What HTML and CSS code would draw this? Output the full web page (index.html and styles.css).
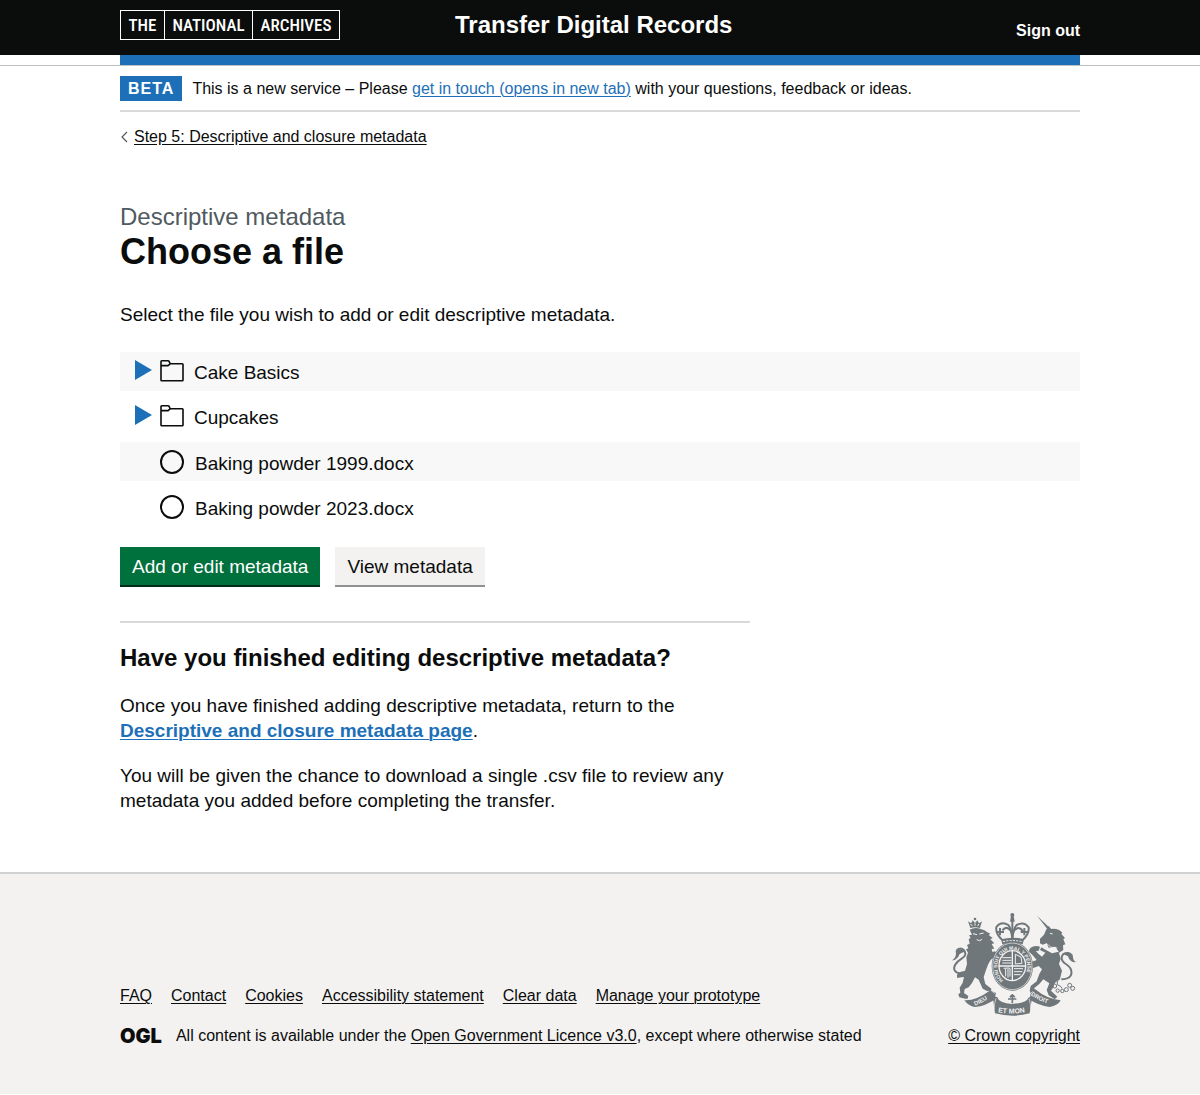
FILE: index.html
```html
<!DOCTYPE html>
<html lang="en">
<head>
<meta charset="utf-8">
<meta name="viewport" content="width=device-width, initial-scale=1">
<title>Choose a file – Transfer Digital Records</title>
<link rel="stylesheet" href="styles.css">
</head>
<body>
<header class="header">
  <div class="container header-row">
    <a class="logo" href="#"><span>THE</span><span>NATIONAL</span><span>ARCHIVES</span></a>
    <a class="service-name" href="#">Transfer Digital Records</a>
    <a class="sign-out" href="#">Sign out</a>
  </div>
</header>
<div class="header-rule"><div class="container header-bar"></div></div>

<div class="container">
  <div class="phase-banner">
    <strong class="tag">BETA</strong>
    <span>This is a new service – Please <a class="link-blue" href="#">get in touch (opens in new tab)</a> with your questions, feedback or ideas.</span>
  </div>
  <a class="back-link" href="#">
    <svg class="back-icon" width="8" height="12" viewBox="0 0 8 12" aria-hidden="true"><path d="M7 1 2 6l5 5" fill="none" stroke="#505a5f" stroke-width="1.2"/></svg>
    <span>Step 5: Descriptive and closure metadata</span>
  </a>

  <main class="main">
    <h1 class="title"><span class="caption">Descriptive metadata</span>Choose a file</h1>
    <p class="body lead">Select the file you wish to add or edit descriptive metadata.</p>

    <form>
      <ul class="tree">
        <li class="row">
          <button class="toggle" type="button" aria-expanded="false">
            <svg class="arrow" width="17" height="20" viewBox="0 0 17 20" aria-hidden="true"><path d="M0 0 17 10 0 20z" fill="#1d70b8"/></svg>
            <svg class="folder" width="24" height="22" viewBox="0 0 24 22" aria-hidden="true"><path d="M1 20V1.500q0-.7.7-.7H8q.8 0 1.200.8L10.200 3.800H22.300q.7 0 .7.700V20q0 .7-.7.7H1.700Q1 20.700 1 20zM1 5.600h7L10.200 3.800" fill="none" stroke="#0b0c0c" stroke-width="1.600"/></svg>
            <span>Cake Basics</span>
          </button>
        </li>
        <li class="row">
          <button class="toggle" type="button" aria-expanded="false">
            <svg class="arrow" width="17" height="20" viewBox="0 0 17 20" aria-hidden="true"><path d="M0 0 17 10 0 20z" fill="#1d70b8"/></svg>
            <svg class="folder" width="24" height="22" viewBox="0 0 24 22" aria-hidden="true"><path d="M1 20V1.500q0-.7.7-.7H8q.8 0 1.200.8L10.200 3.800H22.300q.7 0 .7.700V20q0 .7-.7.7H1.700Q1 20.700 1 20zM1 5.600h7L10.200 3.800" fill="none" stroke="#0b0c0c" stroke-width="1.600"/></svg>
            <span>Cupcakes</span>
          </button>
        </li>
        <li class="row file">
          <input class="radio" type="radio" name="file" id="file-1999">
          <label for="file-1999">Baking powder 1999.docx</label>
        </li>
        <li class="row file">
          <input class="radio" type="radio" name="file" id="file-2023">
          <label for="file-2023">Baking powder 2023.docx</label>
        </li>
      </ul>
      <div class="buttons">
        <button class="button" type="submit">Add or edit metadata</button>
        <button class="button secondary" type="button">View metadata</button>
      </div>
    </form>

    <section class="finished">
      <h2 class="subtitle">Have you finished editing descriptive metadata?</h2>
      <p class="body">Once you have finished adding descriptive metadata, return to the <a class="link-blue strong" href="#">Descriptive and closure metadata page</a>.</p>
      <p class="body">You will be given the chance to download a single .csv file to review any metadata you added before completing the transfer.</p>
    </section>
  </main>
</div>

<footer class="footer">
  <div class="container footer-row">
    <div>
      <ul class="footer-links">
        <li><a href="#">FAQ</a></li>
        <li><a href="#">Contact</a></li>
        <li><a href="#">Cookies</a></li>
        <li><a href="#">Accessibility statement</a></li>
        <li><a href="#">Clear data</a></li>
        <li><a href="#">Manage your prototype</a></li>
      </ul>
      <div class="licence">
        <span class="ogl">OGL</span>
        <span>All content is available under the <a href="#">Open Government Licence v3.0</a>, except where otherwise stated</span>
      </div>
    </div>
    <a class="copyright" href="#">
      <svg class="arms" width="128" height="104" viewBox="30 36 384 312" aria-hidden="true">
        <defs>
          <path id="garter" d="M190 241A45 51 0 1 1 244 241"/>
          <path id="scroll-left" d="M105 317Q134 306 158 285"/>
          <path id="scroll-mid" d="M174 337Q217 345 262 335"/>
          <path id="scroll-right" d="M272 285Q300 306 342 316"/>
        </defs>
        <g class="ink">
          <!-- lion and its crown -->
          <path d="M91 84 84 64l9 6 5-9 7 8 7-8 5 9 9-6-6 20q-15-5-29 0z"/>
          <circle cx="105" cy="57" r="4"/>
          <path d="M89 89q16-9 33-2 13 3 19 9l10 5-5 4 12 9-7 4 12 12-8 2 8 14-8 1 5 18-7 13-8 14-7 18-7 22 5 20 18 14-1 6-12 1-13-7-12-27-11-7-9 17-10 13-12 5-2 12 13 9-2 8H75l-17-4-3-9 6-5-2-15 9-15 4-17-20 2-1-9 9-7 15-5 6-20-2-20 5-14-6-10 7-3-4-10 8-4-3-14 6-3-5-8 9-2z"/>
          <path d="M147 160l18-6 7 7-10 12-20 12-5-15zM66 214l-13 10-2 9 22-4z"/>
          <!-- unicorn -->
          <path d="M291 47 332 86l-6 6z"/>
          <path d="M300 116 312 104 318 90 326 78 333 87Q355 84 367 98L364 102 375 114 370 118 376 133 369 136 370 150 358 158 346 140 326 143 320 130 308 134 300 130z"/>
          <path d="M304 142 318 150 336 160 356 155 362 176 357 192 366 212 360 236 345 248 340 262 333 272 352 290 344 298 326 286 320 270 328 250 310 238 298 252 283 264 285 278 276 285 269 272 272 258 290 244 298 222 306 208 296 198 280 204 272 196 274 186 290 180 278 166 266 154 270 146 282 148 296 162 306 170 316 158 300 150z"/>
          <path d="M268 148Q280 134 300 140L296 152 284 154z"/>
          <!-- scroll -->
          <path d="M73 301q35 2 78-30l17 8-5 20q-25 18-58 22-20-3-32-20zM272 272l14-4q34 29 76 33-8 16-33 20-34-5-59-22z"/>
          <path d="M158 287l14 5q4 17 45 20 44-3 48-19l12-6-8 53q-50 14-104 0z"/>
          <!-- garter -->
          <ellipse cx="217" cy="199" rx="62" ry="73"/>
          <!-- crown cap and band -->
          <path d="M183 118q34-10 69 0l-4 15q-31-9-61 0z"/>
          <circle cx="217" cy="45" r="6"/>
          <path d="M213 48h8l3 17h-14z"/>
        </g>
        <g class="stroke">
          <path d="M73 222Q34 220 45 195q5-10 20-19 17-10 8-24-10-13-24 0" stroke-width="6"/>
          <path d="M364 238q37-2 29-29-4-11-20-20-14-13-4-26 12-10 24 4" stroke-width="6"/>
          <path d="M36 181q15-9 11-28 19-12 31 3-19 0-23 14-8 11-19 11zM371 163q14-14 27 1 1 19 10 22-18 3-24-17z" class="ink"/>
          <path d="M186 119q-20-19-17-38 15-19 36-6 8 8 12 41 4-33 13-41 22-12 36 7 2 20-17 37" stroke-width="6"/>
          <path d="M187 91q15-18 30 8 15-26 32-6M217 61v55" stroke-width="6"/>
          <path d="M180 84v22M253 84v22M169 96h23M242 96h23" stroke-width="6"/>
          <path d="M360 236q-12 6-8 18 14 5 14 12" stroke-width="3"/>
          <circle cx="344" cy="258" r="6" stroke-width="3"/><circle cx="353" cy="272" r="5" stroke-width="3"/><circle cx="367" cy="273" r="5" stroke-width="3"/><circle cx="379" cy="269" r="6" stroke-width="3"/><circle cx="389" cy="256" r="6" stroke-width="3"/><circle cx="398" cy="265" r="6" stroke-width="3"/>
          <path d="M217 282v28M204 297h25M210 292q7-13 14 0" stroke-width="5"/>
        </g>
        <g class="paper">
          <ellipse cx="217" cy="199" rx="59" ry="70" stroke-width="2"/>
          <ellipse cx="217" cy="197" rx="40" ry="45" stroke-width="4"/>
          <path d="M176 198h82M217 153v88" stroke-width="4"/>
          <path d="M187 173h27M187 181h27M187 189h27M222 206h27M222 215h25M222 224h20" stroke-width="3"/>
          <path d="M226 163v29l20-2-3-19zM191 205q17-2 19 0v25M197 206v23M204 206v27" stroke-width="3"/>
          <path d="M189 125q28-7 57 0" stroke-width="3" stroke-dasharray="6 4"/>
          <path d="M310 136q18 22 44 18M318 130q15 16 34 14" stroke-width="2"/>
          <path d="M111 104l-12-3M118 102l13-3M110 119l9 3 7-4M92 72l5 6M105 70v7M117 72l-4 6M330 100l8 2" stroke-width="3"/>
          <path d="M154 272l11 9M278 274l-8 8M168 295q-5 15-6 33M267 295q5 15 5 32" stroke-width="2"/>
        </g>
        <g class="arms-text">
          <text font-size="15"><textPath href="#garter">HONI SOIT QUI MAL Y PENSE</textPath></text>
          <text font-size="18"><textPath href="#scroll-left">DIEU</textPath></text>
          <text font-size="21"><textPath href="#scroll-mid">ET MON</textPath></text>
          <text font-size="18"><textPath href="#scroll-right">DROIT</textPath></text>
        </g>
      </svg>
      <span>© Crown copyright</span>
    </a>
  </div>
</footer>
</body>
</html>
```
FILE: styles.css
```css
*, *::before, *::after { box-sizing: border-box; }

body {
  margin: 0;
  background: #fff;
  color: #0b0c0c;
  font-family: "Liberation Sans", Arial, sans-serif;
  font-size: 16px;
  line-height: 20px;
}

a { color: inherit; text-underline-offset: 2px; text-decoration-thickness: 1px; }

ul { list-style: none; margin: 0; padding: 0; }

.container { width: calc(100% - 60px); max-width: 960px; margin: 0 auto; }

/* Header */
.header { background: #0b0c0c; color: #fff; }
.header a { text-decoration: none; }
.header-row { display: flex; align-items: flex-start; padding: 10px 0 5px; min-height: 55px; }
.logo {
  display: flex;
  min-width: 220px;
  border: 1px solid #fff;
  font-family: "Roboto Condensed", "Liberation Sans Narrow", Roboto, sans-serif;
  font-size: 17px;
  font-weight: 500;
  line-height: 28px;
  text-align: center;
}
.logo span { flex: auto; padding: 0 7px; }
.logo span + span { border-left: 1px solid #fff; }
.service-name { margin-left: 115px; font-size: 24px; font-weight: 700; line-height: 30px; }
.sign-out { margin-left: auto; padding-top: 11px; font-weight: 700; }
.header-rule { border-bottom: 1px solid #bfc1c3; }
.header-bar { height: 10px; background: #1d70b8; }

/* Phase banner */
.phase-banner { display: flex; align-items: center; gap: 10px; padding: 10px 0 9px; border-bottom: 2px solid #d9d9d9; }
.tag { padding: 3px 8px 2px; background: #1d70b8; color: #fff; letter-spacing: 1px; }
.link-blue { color: #1d70b8; }
.strong { font-weight: 700; }

.back-link { display: inline-flex; align-items: center; gap: 6px; margin-top: 15px; text-decoration: none; }
.back-link span { text-decoration: underline; }

/* Main */
.main { padding: 54px 0 59px; }
.title { margin: 0 0 30px; font-size: 36px; line-height: 40px; }
.caption { display: block; color: #505a5f; font-size: 24px; font-weight: 400; line-height: 30px; }
.body { margin: 0 0 20px; font-size: 19px; line-height: 25px; }
.lead { margin-bottom: 25px; }

.tree { display: grid; gap: 6px; margin-bottom: 21px; font-size: 19px; line-height: 25px; }
.row { display: flex; align-items: center; height: 39px; padding-left: 15px; }
.row:nth-child(odd) { background: #f8f8f8; }
.row.file { gap: 11px; padding-left: 40px; }
.row label, .toggle span { padding-top: 3px; }
.toggle { display: flex; align-items: center; padding: 0 0 2px; border: 0; background: none; color: inherit; font: inherit; cursor: pointer; }
.arrow { margin: 0 8px 2px 0; }
.folder { margin-right: 10px; }
.radio { appearance: none; width: 24px; height: 24px; margin: 0; border: 2px solid #0b0c0c; border-radius: 50%; background: transparent; }
.radio:checked { background: radial-gradient(#0b0c0c 6px, transparent 7px); }

.buttons { display: flex; gap: 15px; }
.button {
  height: 38px;
  padding: 0 12px;
  border: 0;
  background: #00703c;
  box-shadow: 0 2px 0 #002d18;
  color: #fff;
  font-family: inherit;
  font-size: 19px;
  line-height: 25px;
  cursor: pointer;
}
.button.secondary { background: #f3f2f1; box-shadow: 0 2px 0 #929191; color: #0b0c0c; }

.finished { max-width: 630px; margin-top: 36px; padding-top: 20px; border-top: 2px solid #d9d9d9; }
.finished .body:last-child { margin-bottom: 0; }
.subtitle { margin: 0 0 20px; font-size: 24px; line-height: 30px; }

/* Footer */
.footer { border-top: 2px solid #cfd1d3; background: #f3f2f1; }
.footer-row { display: flex; justify-content: space-between; align-items: flex-end; padding: 38px 0 48px; }
.footer-links { display: flex; flex-wrap: wrap; gap: 19px; margin-bottom: 20px; }
.licence { display: flex; align-items: center; gap: 14px; }
.ogl { font-family: Inter, sans-serif; font-size: 20px; font-weight: 900; }
.copyright { display: grid; justify-items: center; gap: 10px; text-decoration: none; }
.copyright span { text-decoration: underline; }
.ink { fill: #6f777b; stroke: none; }
.stroke { fill: none; stroke: #6f777b; }
.stroke .ink { fill: #6f777b; }
.paper { fill: none; stroke: #f3f2f1; }
.arms-text { fill: #f3f2f1; font-weight: 700; }
```
